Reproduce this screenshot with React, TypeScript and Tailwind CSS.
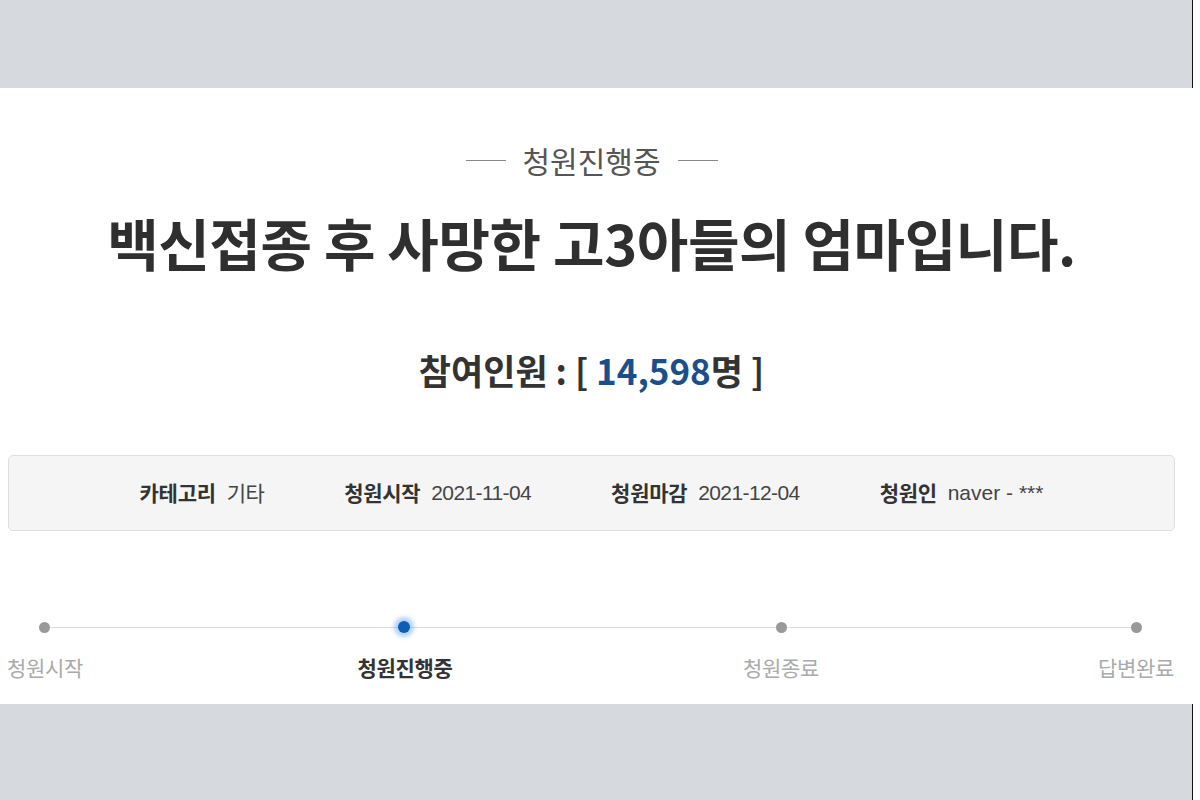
import React from "react";

const KR = { fontFamily: '"Noto Sans CJK KR", "Noto Sans", sans-serif' };
const LAT = { fontFamily: '"Liberation Sans", "Noto Sans CJK KR", sans-serif' };

function Band({ h }: { h: string }) {
  return (
    <div className={`flex w-[1200px] ${h}`}>
      <div className="h-full w-[1192px] shrink-0 bg-[#d6d9dd]" />
      <div className="h-full w-px shrink-0 bg-[#111]" />
      <div className="h-full flex-1 bg-white" />
    </div>
  );
}

function Info({ label, value, sans, wide }: { label: string; value: string; sans?: boolean; wide?: boolean }) {
  return (
    <div className="flex items-center gap-[11px]">
      <span className="text-[21px] font-bold text-[#333] tracking-[-0.3px]">{label}</span>
      <span
        className={`text-[21px] text-[#444] ${wide ? "tracking-normal" : "tracking-[-0.6px]"}`}
        style={sans ? LAT : undefined}
      >
        {value}
      </span>
    </div>
  );
}

export default function App() {
  return (
    <div className="flex h-[800px] w-[1200px] flex-col bg-white" style={KR}>
      <div className="h-[88px]">
        <Band h="h-[88px]" />
      </div>
      <div className="flex h-[616px] flex-col bg-white">
        <div className="w-[1183px]">
          <div className="mt-[52px] flex h-[40px] items-center justify-center">
            <div className="h-px w-[40px] bg-[#888]" />
            <span className="mx-[17px] text-[30px] leading-none text-[#555]">청원진행중</span>
            <div className="h-px w-[40px] bg-[#888]" />
          </div>
          <div className="mt-[30px] flex h-[64px] items-center justify-center">
            <h1 className="text-[56px] font-bold leading-none text-[#2f2f2f] tracking-[-0.4px]">
              백신접종 후 사망한 고3아들의 엄마입니다.
            </h1>
          </div>
          <div className="mt-[73px] flex h-[44px] items-center justify-center">
            <span className="text-[35px] font-bold leading-none text-[#333]">
              참여인원 : [ <span className="text-[#1b4f8c]">14,598</span>명 ]
            </span>
          </div>
        </div>
        <div className="ml-[8px] mt-[64px] flex h-[76px] w-[1167px] items-center justify-center gap-[80px] rounded-[5px] border border-[#dedede] bg-[#f5f5f5]">
          <Info label="카테고리" value="기타" />
          <Info label="청원시작" value="2021-11-04" sans />
          <Info label="청원마감" value="2021-12-04" sans />
          <Info label="청원인" value="naver - ***" sans wide />
        </div>
        <div className="relative mt-[86px] flex h-[20px] w-[1200px] items-center">
          <div className="absolute left-[44px] top-1/2 h-px w-[1092px] bg-[#dcdcdc]" />
          <div className="relative flex w-full items-center">
            <div className="w-[39px] shrink-0" />
            <div className="h-[11px] w-[11px] shrink-0 rounded-full bg-[#999]" />
            <div className="w-[348px] shrink-0" />
            <div className="h-[12px] w-[12px] shrink-0 rounded-full bg-[#0b5fb5] shadow-[0_0_4px_4px_rgba(80,150,235,0.45)]" />
            <div className="w-[366px] shrink-0" />
            <div className="h-[11px] w-[11px] shrink-0 rounded-full bg-[#999]" />
            <div className="w-[344px] shrink-0" />
            <div className="h-[11px] w-[11px] shrink-0 rounded-full bg-[#999]" />
          </div>
        </div>
        <div className="mt-[18px] flex h-[26px] w-[1200px] items-center">
          <div className="flex w-[90px] shrink-0 justify-center">
            <span className="text-[21px] text-[#aaa] tracking-[-0.3px]">청원시작</span>
          </div>
          <div className="w-[260px] shrink-0" />
          <div className="flex w-[110px] shrink-0 justify-center">
            <span className="text-[21px] font-bold text-[#333] tracking-[-0.3px]">청원진행중</span>
          </div>
          <div className="w-[271px] shrink-0" />
          <div className="flex w-[100px] shrink-0 justify-center">
            <span className="text-[21px] text-[#aaa] tracking-[-0.3px]">청원종료</span>
          </div>
          <div className="w-[255px] shrink-0" />
          <div className="flex w-[100px] shrink-0 justify-center">
            <span className="text-[21px] text-[#aaa] tracking-[-0.3px]">답변완료</span>
          </div>
        </div>
      </div>
      <div className="h-[96px]">
        <Band h="h-[96px]" />
      </div>
    </div>
  );
}
